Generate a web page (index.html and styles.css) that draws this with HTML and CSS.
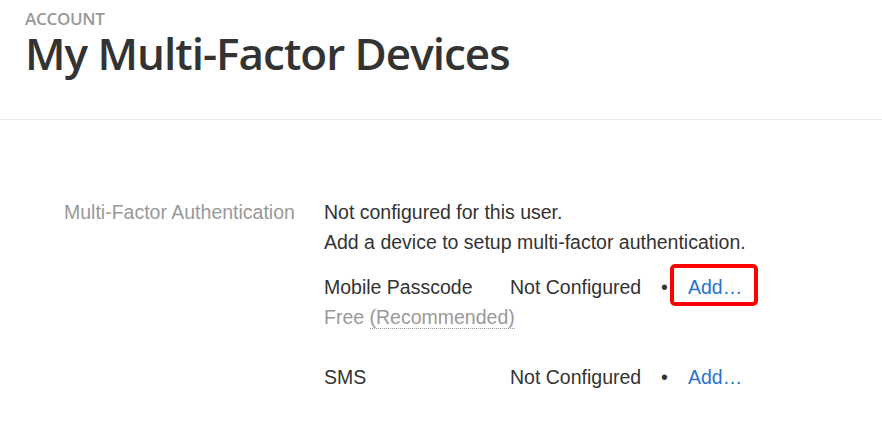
FILE: index.html
```html
<!DOCTYPE html>
<html>
<head>
<meta charset="utf-8">
<link rel="stylesheet" href="styles.css">
</head>
<body>
<header class="page-header">
  <div class="eyebrow">ACCOUNT</div>
  <h1 class="title">My Multi-Factor Devices</h1>
</header>
<main class="content">
  <div class="field">
    <div class="field-label">Multi-Factor Authentication</div>
    <div class="field-value">
      <p class="line">Not configured for this user.</p>
      <p class="line">Add a device to setup multi-factor authentication.</p>
      <div class="devices">
        <div class="device">
          <div class="device-name">Mobile Passcode</div>
          <div class="device-status">Not Configured</div>
          <div class="device-dot">•</div>
          <div class="device-action"><a class="add-link highlighted" href="#">Add…</a></div>
          <div class="device-note">Free <span class="dotted">(Recommended)</span></div>
        </div>
        <div class="device device-sms">
          <div class="device-name">SMS</div>
          <div class="device-status">Not Configured</div>
          <div class="device-dot">•</div>
          <div class="device-action"><a class="add-link" href="#">Add…</a></div>
        </div>
      </div>
    </div>
  </div>
</main>
</body>
</html>
```

FILE: styles.css
```css
html, body {
  margin: 0;
  padding: 0;
  background: #fff;
}
body {
  font-family: "Liberation Sans", Arial, sans-serif;
  color: #333;
  width: 882px;
  height: 439px;
  overflow: hidden;
}
.page-header {
  padding: 8px 25px 0;
  height: 111px;
  box-sizing: content-box;
  border-bottom: 1px solid #eaeaea;
  font-family: "Open Sans", "Noto Sans", sans-serif;
}
.eyebrow {
  font-size: 17px;
  font-weight: 600;
  color: #999;
  line-height: 21px;
  letter-spacing: -0.3px;
}
.title {
  margin: 0;
  font-size: 44px;
  font-weight: 600;
  line-height: 48px;
  color: #333;
  letter-spacing: -1px;
}
.content {
  padding: 77px 0 0 64px;
}
.field {
  display: grid;
  grid-template-columns: 260px 1fr;
}
.field-label {
  font-size: 19.5px;
  line-height: 30px;
  color: #999;
}
.field-value {
  font-size: 19.5px;
  line-height: 30px;
}
.line {
  margin: 0;
}
.devices {
  padding-top: 15px;
  display: flex;
  flex-direction: column;
  gap: 30px;
}
.device {
  display: grid;
  grid-template-columns: 186px 150px 28px auto;
}
.device-dot {
  padding-left: 1px;
}
.device-note {
  grid-column: 1 / -1;
  color: #999;
}
.dotted {
  border-bottom: 1px dotted #999;
}
.add-link {
  color: #2a74c9;
  text-decoration: none;
  position: relative;
  display: inline-block;
}
.highlighted::after {
  content: "";
  position: absolute;
  left: -18px;
  right: -16px;
  top: -8px;
  bottom: -4px;
  border: 4px solid #f00;
  border-radius: 5px;
}
```
